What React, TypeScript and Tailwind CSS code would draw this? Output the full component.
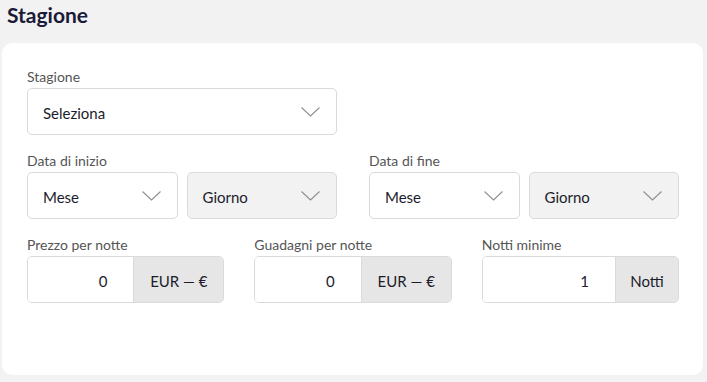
import React from "react";

const font = { fontFamily: "Lato, 'Open Sans', sans-serif" };

function Chevron() {
  return (
    <svg width="19" height="10" viewBox="0 0 19 10" fill="none" className="shrink-0">
      <path d="M0.5 0.5 L9.5 9 L18.5 0.5" stroke="#8f8f8f" strokeWidth="1.1" />
    </svg>
  );
}

function Select({ text, disabled, className }: { text: string; disabled?: boolean; className?: string }) {
  return (
    <div
      className={`h-[47px] flex items-center justify-between pl-[15px] pr-[16px] rounded-[5px] border border-[#dadada] ${
        disabled ? "bg-[#f2f2f2]" : "bg-white"
      } ${className ?? ""}`}
    >
      <span className="text-[15px] text-[#1c1c2b] pt-[3px]">{text}</span>
      <Chevron />
    </div>
  );
}

function Label({ children }: { children: React.ReactNode }) {
  return <div className="text-[14px] leading-[20px] text-[#555555] mb-[1px]">{children}</div>;
}

function AddonInput({ value, addon, addonW }: { value: string; addon: string; addonW: string }) {
  return (
    <div className="h-[47px] flex rounded-[5px] border border-[#dadada] overflow-hidden">
      <div className="flex-1 bg-white flex items-center justify-end pr-[26px] text-[15px] text-[#1c1c2b] pt-[3px]">
        {value}
      </div>
      <div
        className={`${addonW} bg-[#e6e6e6] border-l border-[#dadada] flex items-center justify-center text-[15px] text-[#1c1c2b] pt-[3px]`}
      >
        {addon}
      </div>
    </div>
  );
}

export default function App() {
  return (
    <div className="w-[707px] h-[382px] bg-[#f2f2f2] overflow-hidden" style={font}>
      <div className="pl-[7px] h-[43px] pt-[1px] text-[21px] leading-[28px] font-bold text-[#1b1a38]">Stagione</div>
      <div className="ml-[2px] w-[701px] h-[332px] bg-white rounded-[10px] px-[25px] pt-[24px]">
        <div className="w-[310px]">
          <Label>Stagione</Label>
          <Select text="Seleziona" />
        </div>
        <div className="mt-[16px] grid grid-cols-2 gap-[32px] w-[652px]">
          <div>
            <Label>Data di inizio</Label>
            <div className="grid grid-cols-2 gap-[9px]">
              <Select text="Mese" />
              <Select text="Giorno" disabled />
            </div>
          </div>
          <div>
            <Label>Data di fine</Label>
            <div className="grid grid-cols-2 gap-[9px]">
              <Select text="Mese" />
              <Select text="Giorno" disabled />
            </div>
          </div>
        </div>
        <div className="mt-[16px] grid grid-cols-3 gap-[30px] w-[652px]">
          <div>
            <Label>Prezzo per notte</Label>
            <AddonInput value="0" addon="EUR — €" addonW="w-[90px]" />
          </div>
          <div>
            <Label>Guadagni per notte</Label>
            <AddonInput value="0" addon="EUR — €" addonW="w-[90px]" />
          </div>
          <div>
            <Label>Notti minime</Label>
            <AddonInput value="1" addon="Notti" addonW="w-[63px]" />
          </div>
        </div>
      </div>
    </div>
  );
}
